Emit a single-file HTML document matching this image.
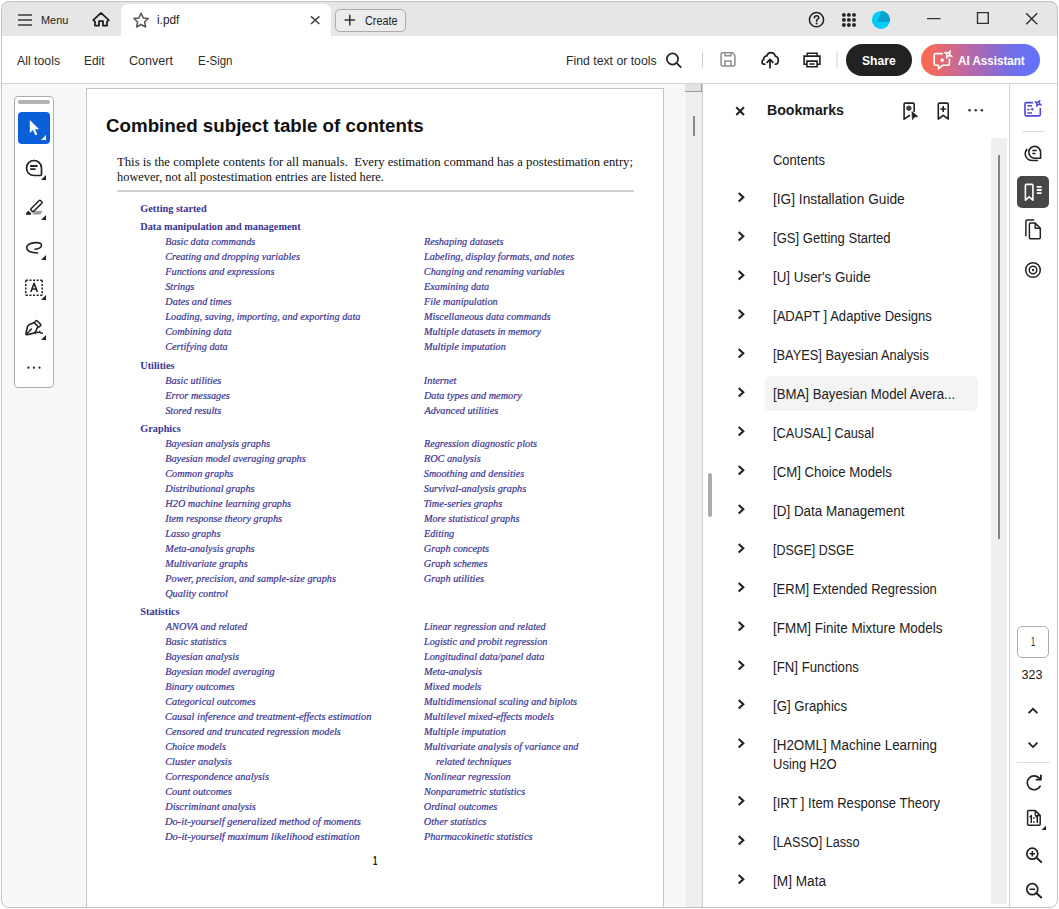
<!DOCTYPE html>
<html><head><meta charset="utf-8">
<style>
*{margin:0;padding:0;box-sizing:border-box}
html,body{width:1059px;height:909px;overflow:hidden;background:#fff}
#app{position:absolute;left:0;top:0;width:1059px;height:909px;clip-path:inset(1px round 8px);overflow:hidden}
#frame{position:absolute;left:1px;top:1px;width:1057px;height:907px;border:1px solid #c3c3c3;border-radius:8px}
.a{position:absolute}
.t{position:absolute;white-space:nowrap;line-height:0;transform-origin:0 0}
svg.ov{position:absolute;left:0;top:0}
</style></head><body>
<div id="app">
<div class="a" style="left:0px;top:0px;width:1059px;height:909px;background:#f8f8f8;"></div>
<div class="a" style="left:0px;top:0px;width:1059px;height:36px;background:#e6e6e6;"></div>
<div class="a" style="left:121px;top:4px;width:210px;height:32px;background:#fff;border-radius:7px 7px 0 0"></div>
<div class="a" style="left:335px;top:8.5px;width:71px;height:23px;background:#ececec;border:1px solid #ababab;border-radius:5px;box-sizing:border-box"></div>
<div class="a" style="left:0px;top:36px;width:1059px;height:47px;background:#fff;"></div>
<div class="a" style="left:0px;top:83px;width:1059px;height:1px;background:#d5d5d5;"></div>
<div class="a" style="left:846px;top:44px;width:66px;height:32px;background:#222;border-radius:16px"></div>
<div class="a" style="left:921px;top:44px;width:119px;height:32px;background:linear-gradient(90deg,#fd6a4c 0%,#f06a62 10%,#c0699f 36%,#9169c9 60%,#6e70ee 80%,#6372f7 100%);border-radius:16px"></div>
<div class="a" style="left:14px;top:96px;width:40px;height:292px;background:#fff;border:1px solid #adadad;border-radius:4px;box-sizing:border-box"></div>
<div class="a" style="left:18px;top:100px;width:32px;height:4px;background:#b3b3b3;border-radius:2px"></div>
<div class="a" style="left:18px;top:112px;width:32px;height:32px;background:#0b5fd8;border-radius:4px"></div>
<div class="a" style="left:86px;top:88px;width:578px;height:830px;background:#fff;border:1px solid #c5c5c5;box-sizing:border-box"></div>
<div class="a" style="left:117px;top:190px;width:517px;height:2px;background:#d2d2d2;"></div>
<div class="a" style="left:686px;top:84px;width:16px;height:830px;background:#efefef;"></div>
<div class="a" style="left:685px;top:84px;width:17px;height:8px;background:#e2e2e2;border-right:1px solid #9c9c9c;border-bottom:1px solid #9c9c9c;box-sizing:border-box"></div>
<div class="a" style="left:693px;top:116px;width:2px;height:20px;background:#8a8a8a;"></div>
<div class="a" style="left:702px;top:84px;width:308px;height:830px;background:#fff;"></div>
<div class="a" style="left:702px;top:84px;width:1px;height:830px;background:#cdcdcd;"></div>
<div class="a" style="left:708px;top:473px;width:4px;height:44px;background:#ababab;border-radius:2px"></div>
<div class="a" style="left:765px;top:376px;width:213px;height:35px;background:#f4f4f4;border-radius:5px"></div>
<div class="a" style="left:991px;top:138px;width:16px;height:766px;background:#efefef;"></div>
<div class="a" style="left:998px;top:155px;width:2px;height:384px;background:#858585;"></div>
<div class="a" style="left:1010px;top:84px;width:49px;height:830px;background:#fff;"></div>
<div class="a" style="left:1009px;top:84px;width:1px;height:830px;background:#d4d4d4;"></div>
<div class="a" style="left:1017px;top:176px;width:32px;height:32px;background:#474747;border-radius:5px"></div>
<div class="a" style="left:1017px;top:626px;width:32px;height:32px;background:#fff;border:1px solid #acacac;border-radius:5px;box-sizing:border-box"></div>
<div class="a" style="left:1022px;top:131px;width:23px;height:1px;background:#dedede;"></div>
<div class="a" style="left:1017px;top:762px;width:33px;height:1px;background:#dedede;"></div>
<svg class="ov" width="1059" height="909" viewBox="0 0 1059 909">
<path d="M18 15H32M18 20H32M18 25H32" fill="none" stroke="#3a3a3a" stroke-width="1.7" />
<path d="M95 21.6L93.2 20.1L101 12.9L108.8 20.1L107 21.6V25.7H103V21H99V25.7H95Z" fill="none" stroke="#1e1e1e" stroke-width="1.75" stroke-linejoin="round"/>
<path d="M141.1 13.2L143.3 17.9L148.3 18.5L144.6 22L145.6 27L141.1 24.5L136.6 27L137.6 22L133.9 18.5L138.9 17.9Z" fill="none" stroke="#555" stroke-width="1.5" stroke-linejoin="round"/>
<path d="M311 16.4L319.4 24M319.4 16.4L311 24" fill="none" stroke="#444" stroke-width="1.5" />
<path d="M349.8 14.8V25.4M344.5 20.1H355.1" fill="none" stroke="#333" stroke-width="1.5" />
<circle cx="816.5" cy="19.7" r="7.1" fill="none" stroke="#222" stroke-width="1.5"/>
<path d="M814.4 17.7Q814.5 15.7 816.6 15.7Q818.7 15.7 818.7 17.5Q818.7 18.7 817.5 19.4Q816.6 19.9 816.6 21.1" fill="none" stroke="#222" stroke-width="1.6" stroke-linecap="round"/>
<circle cx="816.6" cy="23.5" r="1" fill="#222"/>
<circle cx="843.9" cy="14.9" r="1.95" fill="#262626"/>
<circle cx="843.9" cy="19.9" r="1.95" fill="#262626"/>
<circle cx="843.9" cy="25" r="1.95" fill="#262626"/>
<circle cx="848.9" cy="14.9" r="1.95" fill="#262626"/>
<circle cx="848.9" cy="19.9" r="1.95" fill="#262626"/>
<circle cx="848.9" cy="25" r="1.95" fill="#262626"/>
<circle cx="854" cy="14.9" r="1.95" fill="#262626"/>
<circle cx="854" cy="19.9" r="1.95" fill="#262626"/>
<circle cx="854" cy="25" r="1.95" fill="#262626"/>
<circle cx="880.9" cy="19.9" r="9" fill="#00cdfb"/>
<path d="M881.5 10.92L877.1 21.9H889.67A9 9 0 0 0 881.5 10.92Z" fill="#05a2cb" stroke="none" stroke-width="0" />
<path d="M927 18.6H940.5" fill="none" stroke="#333" stroke-width="1.2" />
<path d="M977.5 12.6H988.3V23.4H977.5Z" fill="none" stroke="#333" stroke-width="1.4" />
<path d="M1026.2 13.2L1037.2 24.2M1037.2 13.2L1026.2 24.2" fill="none" stroke="#2a2a2a" stroke-width="1.35" />
<circle cx="672.5" cy="59" r="5.6" fill="none" stroke="#222" stroke-width="1.7"/>
<path d="M676.6 63.2L681.3 67.6" fill="none" stroke="#222" stroke-width="1.8" />
<path d="M702.5 51.5V67.5" fill="none" stroke="#d0d0d0" stroke-width="1" />
<path d="M837 51.5V67.5" fill="none" stroke="#d0d0d0" stroke-width="1" />
<path d="M722.5 52.85H732.8L734.95 55.6V64.4Q734.95 65.9 733.45 65.9H722.55Q721.05 65.9 721.05 64.4V54.35Q721.05 52.85 722.5 52.85Z" fill="none" stroke="#8e8e8e" stroke-width="1.5" stroke-linejoin="round"/>
<path d="M724.95 52.85V55.85H730.95V52.85M724.95 65.9V61.05H730.95V65.9" fill="none" stroke="#8e8e8e" stroke-width="1.5" />
<path d="M764.8 64.2H763.6Q762 64.2 762 62Q762 59.8 763.8 59.4Q763.4 56.3 766.8 55.9Q767.8 52.6 770.8 52.6Q774.4 52.6 775.2 56Q778.3 56.8 778.3 60.2Q778.3 64.2 775.4 64.2" fill="none" stroke="#1e1e1e" stroke-width="1.7" stroke-linecap="round" stroke-linejoin="round"/>
<path d="M770 68.6V59.6M766.6 62.8L770 59.4L773.4 62.8" fill="none" stroke="#1e1e1e" stroke-width="1.7" stroke-linejoin="round"/>
<path d="M807.3 55.6V53.3H817.1V55.6" fill="none" stroke="#1e1e1e" stroke-width="1.6" />
<path d="M806.6 64.2H804.1V56.1H819.9V64.2H817.4" fill="none" stroke="#1e1e1e" stroke-width="1.6" stroke-linejoin="miter"/>
<path d="M806.9 61.1H817.1V66.8H806.9Z" fill="none" stroke="#1e1e1e" stroke-width="1.6" />
<path d="M809.4 64H814.6" fill="none" stroke="#1e1e1e" stroke-width="1.5" />
<path d="M943 53.6H935.6Q934.2 53.6 934.2 55V63.9Q934.2 65.3 935.6 65.3H938.5V68.8L942.6 65.3H948Q949.4 65.3 949.4 63.9V58.6" fill="none" stroke="#fff" stroke-width="1.6" stroke-linejoin="round"/>
<path d="M952.36 56.56L948.80 56.03L946.14 58.46L946.67 54.90L944.24 52.24L947.80 52.77L950.46 50.34L949.93 53.90Z" fill="#fff" stroke="#fff" stroke-width="0.9" stroke-linejoin="round"/>
<circle cx="948.3" cy="54.4" r="0.75" fill="#d86a84"/>
<rect x="940.7" y="58.7" width="3" height="3" fill="#fff" transform="rotate(-15 942.2 60.2)"/>
<path d="M29.8 120V133L32.9 130L35.3 135.2L37.3 134.2L35 129.3H39.2Z" fill="#fff" stroke="none" stroke-width="0" />
<path d="M46 135V140H41Z" fill="#fff" stroke="none" stroke-width="0" />
<path d="M34 160.5A7.5 7.5 0 1 0 34 175.5H40.2Q41.5 175.5 41.5 174.2V168A7.5 7.5 0 0 0 34 160.5Z" fill="none" stroke="#222" stroke-width="1.7" stroke-linejoin="round"/>
<path d="M30.1 166H37.6M30.1 169.1H35.6" fill="none" stroke="#222" stroke-width="1.9" />
<path d="M46 175V180H41Z" fill="#222" stroke="none" stroke-width="0" />
<rect x="29.7" y="204.1" width="13.4" height="3.7" rx="0.9" fill="#fff" stroke="#222" stroke-width="1.5" transform="rotate(-45 36.4 205.95)"/>
<path d="M28.3 210.9L31.1 213.5L30.6 214.5H26.1Q26.1 212.8 28.3 210.9Z" fill="#222" stroke="#222" stroke-width="0.6" stroke-linejoin="round"/>
<path d="M34.6 210.9H42.7L40.4 214.5H32.2Z" fill="#9c9c9c" stroke="none" stroke-width="0" />
<path d="M46 215V220H41Z" fill="#222" stroke="none" stroke-width="0" />
<path d="M35 249.2Q41 248.6 41.5 245.6Q41.8 242.4 36 242.6Q27 243 26.6 247.6Q26.6 252.6 37.6 253" fill="none" stroke="#222" stroke-width="1.6" stroke-linecap="round"/>
<path d="M46 255V260H41Z" fill="#222" stroke="none" stroke-width="0" />
<path d="M25.8 280.3H42.2M25.8 295.3H42.2" fill="none" stroke="#222" stroke-width="1.5" stroke-dasharray="2.1 1.5"/>
<path d="M25.8 280.3V295.3M42.2 280.3V295.3" fill="none" stroke="#222" stroke-width="1.5" stroke-dasharray="2.1 1.5"/>
<path d="M30.9 291.9L34.1 283.3L37.3 291.9M32.1 289H36.1" fill="none" stroke="#222" stroke-width="1.6" stroke-linejoin="round"/>
<path d="M46 295V300H41Z" fill="#222" stroke="none" stroke-width="0" />
<rect x="34.4" y="322.1" width="6.6" height="3.3" rx="0.8" fill="none" stroke="#222" stroke-width="1.5" transform="rotate(45 37.7 323.75)"/>
<path d="M34.6 322.6L29.6 324.6Q27.9 325.3 27.4 327L25.9 333.4Q25.7 334.9 27.2 334.7L33.6 333.1Q35.3 332.6 35.9 331L37.9 326.4" fill="none" stroke="#222" stroke-width="1.6" stroke-linejoin="round"/>
<path d="M26.6 334L31.5 329" fill="none" stroke="#222" stroke-width="1.5" stroke-linecap="round"/>
<path d="M35.3 333.6Q36.6 331.6 37.8 332.4Q38.8 333.2 39.8 331.4Q40.2 333.6 42.4 333.2" fill="none" stroke="#222" stroke-width="1.4" stroke-linecap="round" stroke-linejoin="round"/>
<path d="M46 335V340H41Z" fill="#222" stroke="none" stroke-width="0" />
<circle cx="28.4" cy="367.7" r="1.1" fill="#222"/>
<circle cx="33.9" cy="367.7" r="1.1" fill="#222"/>
<circle cx="39.5" cy="367.7" r="1.1" fill="#222"/>
<path d="M736.3 107.3L744 115M744 107.3L736.3 115" fill="none" stroke="#222" stroke-width="2.0" />
<path d="M909.6 115.5L904.1 119.2V104.2Q904.1 103.1 905.2 103.1H913.1Q914.2 103.1 914.2 104.2V111.4" fill="none" stroke="#222" stroke-width="1.6" stroke-linejoin="round" stroke-linecap="round"/>
<circle cx="908.9" cy="108.2" r="2.2" fill="#4a4a4a" stroke="#222" stroke-width="0.9"/>
<path d="M911.9 111.6L917.9 116.6L914.5 117L912.4 119.8Z" fill="#222" stroke="#222" stroke-width="0.6" stroke-linejoin="round"/>
<path d="M938.3 104.2Q938.3 103.1 939.4 103.1H947.1Q948.2 103.1 948.2 104.2V119L943.2 115.3L938.3 119Z" fill="none" stroke="#222" stroke-width="1.6" stroke-linejoin="round"/>
<path d="M943.2 106.1V111.9M940.3 109H946.1" fill="none" stroke="#222" stroke-width="1.6" />
<circle cx="969.6" cy="110.3" r="1.25" fill="#333"/>
<circle cx="975.7" cy="110.3" r="1.25" fill="#333"/>
<circle cx="981.8" cy="110.3" r="1.25" fill="#333"/>
<path d="M1033 102.6H1026.3Q1025 102.6 1025 103.9V114.6Q1025 115.9 1026.3 115.9H1039Q1040.3 115.9 1040.3 114.6V108" fill="none" stroke="#5246d9" stroke-width="1.6" stroke-linejoin="round"/>
<path d="M1027.3 105.7H1032M1027.3 109.4H1029.6M1027.3 113H1032" fill="none" stroke="#5246d9" stroke-width="1.5" />
<circle cx="1032.3" cy="109.3" r="1.2" fill="#5246d9"/>
<path d="M1041.47 105.14L1038.61 104.74L1036.46 106.67L1036.86 103.81L1034.93 101.66L1037.79 102.06L1039.94 100.13L1039.54 102.99Z" fill="#5246d9" stroke="#5246d9" stroke-width="1.0" stroke-linejoin="round"/>
<circle cx="1038.2" cy="103.4" r="0.6" fill="#fff"/>
<path d="M1026.9 149.3Q1024.4 152.5 1025.6 156Q1027.4 160.4 1032.4 160.5H1037.4" fill="none" stroke="#222" stroke-width="1.6" stroke-linecap="round"/>
<path d="M1034.7 146.4A5.9 5.9 0 1 0 1034.7 158.2H1040.6V152.3A5.9 5.9 0 0 0 1034.7 146.4Z" fill="none" stroke="#222" stroke-width="1.6" stroke-linejoin="round"/>
<path d="M1032.3 150.6H1036.8M1032.3 153.4H1035.5" fill="none" stroke="#222" stroke-width="1.5" />
<path d="M1025.4 185.2Q1025.4 184.4 1026.2 184.4H1032.1Q1032.9 184.4 1032.9 185.2V200.2L1029.15 196.8L1025.4 200.2Z" fill="none" stroke="#fff" stroke-width="1.6" stroke-linejoin="round"/>
<path d="M1036.8 186.9H1041.6M1036.8 190H1041.6M1036.8 193.1H1041.6" fill="none" stroke="#fff" stroke-width="1.8" />
<path d="M1033.6 220H1027Q1025.9 220 1025.9 221.1V235.8" fill="none" stroke="#222" stroke-width="1.5" stroke-linecap="round" stroke-linejoin="round"/>
<path d="M1035.2 223.1H1030.5Q1029.4 223.1 1029.4 224.2V237.6Q1029.4 238.7 1030.5 238.7H1039.2Q1040.3 238.7 1040.3 237.6V228.2Z" fill="none" stroke="#222" stroke-width="1.5" stroke-linejoin="round"/>
<path d="M1035.2 223.3V228.2H1040.1" fill="none" stroke="#222" stroke-width="1.4" stroke-linejoin="round"/>
<circle cx="1033" cy="270" r="7.3" fill="none" stroke="#222" stroke-width="1.5"/>
<circle cx="1033" cy="270" r="3.8" fill="none" stroke="#222" stroke-width="1.5"/>
<circle cx="1033" cy="270" r="1.2" fill="#222"/>
<path d="M1028.6 713.2L1033 708.8L1037.4 713.2" fill="none" stroke="#222" stroke-width="1.8" />
<path d="M1028.6 742.7L1033 747.1L1037.4 742.7" fill="none" stroke="#222" stroke-width="1.8" />
<path d="M1040.1 786.3A6.9 6.9 0 1 1 1039.6 778.6" fill="none" stroke="#222" stroke-width="1.7" stroke-linecap="round"/>
<path d="M1036.5 779.7H1040.9V775.3" fill="none" stroke="#222" stroke-width="1.8" stroke-linejoin="miter" stroke-linecap="round"/>
<path d="M1028.6 810.6H1035.2L1040.2 815.6V824.2Q1040.2 825.2 1039.2 825.2H1028.6Q1027.6 825.2 1027.6 824.2V811.6Q1027.6 810.6 1028.6 810.6Z" fill="none" stroke="#222" stroke-width="1.5" stroke-linejoin="round"/>
<path d="M1035.2 810.8V814.6Q1035.2 815.6 1036.2 815.6H1040" fill="none" stroke="#222" stroke-width="1.3" />
<path d="M1029.6 817L1031.3 815.9V822.9M1035.6 817L1037.3 815.9V822.9" fill="none" stroke="#222" stroke-width="1.5" />
<rect x="1033.1" y="817.3" width="1.5" height="1.5" fill="#222"/><rect x="1033.1" y="821.3" width="1.5" height="1.5" fill="#222"/>
<path d="M1046 825.6V830H1041.6Z" fill="#222" stroke="none" stroke-width="0" />
<circle cx="1032.3" cy="853.7" r="5.5" fill="none" stroke="#222" stroke-width="1.7"/>
<path d="M1036.3 857.6L1041.2 862" fill="none" stroke="#222" stroke-width="2.0" stroke-linecap="round"/>
<path d="M1029.6 853.7H1035M1032.3 851V856.4" fill="none" stroke="#222" stroke-width="1.6" />
<circle cx="1032.3" cy="889.2" r="5.5" fill="none" stroke="#222" stroke-width="1.7"/>
<path d="M1036.3 893.1L1041.2 897.5" fill="none" stroke="#222" stroke-width="2.0" stroke-linecap="round"/>
<path d="M1029.6 889.2H1035" fill="none" stroke="#222" stroke-width="1.6" />
<path d="M738.7 192.89999999999998L743.3 197.2L738.7 201.5" fill="none" stroke="#222" stroke-width="2.1" />
<path d="M738.7 231.89999999999998L743.3 236.2L738.7 240.5" fill="none" stroke="#222" stroke-width="2.1" />
<path d="M738.7 270.9L743.3 275.2L738.7 279.5" fill="none" stroke="#222" stroke-width="2.1" />
<path d="M738.7 309.9L743.3 314.2L738.7 318.5" fill="none" stroke="#222" stroke-width="2.1" />
<path d="M738.7 348.9L743.3 353.2L738.7 357.5" fill="none" stroke="#222" stroke-width="2.1" />
<path d="M738.7 387.9L743.3 392.2L738.7 396.5" fill="none" stroke="#222" stroke-width="2.1" />
<path d="M738.7 426.9L743.3 431.2L738.7 435.5" fill="none" stroke="#222" stroke-width="2.1" />
<path d="M738.7 465.9L743.3 470.2L738.7 474.5" fill="none" stroke="#222" stroke-width="2.1" />
<path d="M738.7 504.90000000000003L743.3 509.20000000000005L738.7 513.5" fill="none" stroke="#222" stroke-width="2.1" />
<path d="M738.7 543.9000000000001L743.3 548.2L738.7 552.5" fill="none" stroke="#222" stroke-width="2.1" />
<path d="M738.7 582.9000000000001L743.3 587.2L738.7 591.5" fill="none" stroke="#222" stroke-width="2.1" />
<path d="M738.7 621.9000000000001L743.3 626.2L738.7 630.5" fill="none" stroke="#222" stroke-width="2.1" />
<path d="M738.7 660.9000000000001L743.3 665.2L738.7 669.5" fill="none" stroke="#222" stroke-width="2.1" />
<path d="M738.7 699.9000000000001L743.3 704.2L738.7 708.5" fill="none" stroke="#222" stroke-width="2.1" />
<path d="M738.7 738.9000000000001L743.3 743.2L738.7 747.5" fill="none" stroke="#222" stroke-width="2.1" />
<path d="M738.7 796.5L743.3 800.8L738.7 805.0999999999999" fill="none" stroke="#222" stroke-width="2.1" />
<path d="M738.7 836.0L743.3 840.3L738.7 844.5999999999999" fill="none" stroke="#222" stroke-width="2.1" />
<path d="M738.7 874.9000000000001L743.3 879.2L738.7 883.5" fill="none" stroke="#222" stroke-width="2.1" />
</svg>
<div class="t" style="left:40.70px;top:20.00px;font-size:11.4px;font-family:'Liberation Sans',sans-serif;color:#222;transform:scaleX(0.9579);">Menu</div>
<div class="t" style="left:157.00px;top:20.00px;font-size:12px;font-family:'Liberation Sans',sans-serif;color:#222;transform:scaleX(0.9846);">i.pdf</div>
<div class="t" style="left:365.00px;top:21.00px;font-size:12px;font-family:'Liberation Sans',sans-serif;color:#222;transform:scaleX(0.9028);">Create</div>
<div class="t" style="left:16.90px;top:61.00px;font-size:13.5px;font-family:'Liberation Sans',sans-serif;color:#2c2c2c;transform:scaleX(0.9101);">All tools</div>
<div class="t" style="left:84.30px;top:61.00px;font-size:13.5px;font-family:'Liberation Sans',sans-serif;color:#2c2c2c;transform:scaleX(0.8817);">Edit</div>
<div class="t" style="left:129.00px;top:61.00px;font-size:13.5px;font-family:'Liberation Sans',sans-serif;color:#2c2c2c;transform:scaleX(0.9312);">Convert</div>
<div class="t" style="left:197.50px;top:61.00px;font-size:13.5px;font-family:'Liberation Sans',sans-serif;color:#2c2c2c;transform:scaleX(0.8519);">E-Sign</div>
<div class="t" style="left:566.40px;top:61.00px;font-size:13.5px;font-family:'Liberation Sans',sans-serif;color:#2c2c2c;transform:scaleX(0.9078);">Find text or tools</div>
<div class="t" style="left:862.00px;top:61.00px;font-size:13px;font-family:'Liberation Sans',sans-serif;color:#fff;font-weight:bold;transform:scaleX(0.9350);">Share</div>
<div class="t" style="left:958.00px;top:61.00px;font-size:13px;font-family:'Liberation Sans',sans-serif;color:#fff;font-weight:bold;transform:scaleX(0.8935);">AI Assistant</div>
<div class="t" style="left:767.00px;top:110.00px;font-size:14.5px;font-family:'Liberation Sans',sans-serif;color:#1a1a1a;font-weight:bold;transform:scaleX(0.9747);">Bookmarks</div>
<div class="t" style="left:773.20px;top:160.00px;font-size:14.7px;font-family:'Liberation Sans',sans-serif;color:#222;transform:scaleX(0.8836);">Contents</div>
<div class="t" style="left:773.20px;top:199.00px;font-size:14.7px;font-family:'Liberation Sans',sans-serif;color:#222;transform:scaleX(0.9324);">[IG] Installation Guide</div>
<div class="t" style="left:773.20px;top:238.00px;font-size:14.7px;font-family:'Liberation Sans',sans-serif;color:#222;transform:scaleX(0.8893);">[GS] Getting Started</div>
<div class="t" style="left:773.20px;top:277.00px;font-size:14.7px;font-family:'Liberation Sans',sans-serif;color:#222;transform:scaleX(0.9101);">[U] User's Guide</div>
<div class="t" style="left:773.20px;top:316.00px;font-size:14.7px;font-family:'Liberation Sans',sans-serif;color:#222;transform:scaleX(0.8900);">[ADAPT ] Adaptive Designs</div>
<div class="t" style="left:773.20px;top:355.00px;font-size:14.7px;font-family:'Liberation Sans',sans-serif;color:#222;transform:scaleX(0.8727);">[BAYES] Bayesian Analysis</div>
<div class="t" style="left:773.20px;top:394.00px;font-size:14.7px;font-family:'Liberation Sans',sans-serif;color:#222;transform:scaleX(0.9004);">[BMA] Bayesian Model Avera...</div>
<div class="t" style="left:773.20px;top:433.00px;font-size:14.7px;font-family:'Liberation Sans',sans-serif;color:#222;transform:scaleX(0.8661);">[CAUSAL] Causal</div>
<div class="t" style="left:773.20px;top:472.00px;font-size:14.7px;font-family:'Liberation Sans',sans-serif;color:#222;transform:scaleX(0.8991);">[CM] Choice Models</div>
<div class="t" style="left:773.20px;top:511.00px;font-size:14.7px;font-family:'Liberation Sans',sans-serif;color:#222;transform:scaleX(0.9152);">[D] Data Management</div>
<div class="t" style="left:773.20px;top:550.00px;font-size:14.7px;font-family:'Liberation Sans',sans-serif;color:#222;transform:scaleX(0.8477);">[DSGE] DSGE</div>
<div class="t" style="left:773.20px;top:589.00px;font-size:14.7px;font-family:'Liberation Sans',sans-serif;color:#222;transform:scaleX(0.8841);">[ERM] Extended Regression</div>
<div class="t" style="left:773.20px;top:628.00px;font-size:14.7px;font-family:'Liberation Sans',sans-serif;color:#222;transform:scaleX(0.9148);">[FMM] Finite Mixture Models</div>
<div class="t" style="left:773.20px;top:667.00px;font-size:14.7px;font-family:'Liberation Sans',sans-serif;color:#222;transform:scaleX(0.8996);">[FN] Functions</div>
<div class="t" style="left:773.20px;top:706.00px;font-size:14.7px;font-family:'Liberation Sans',sans-serif;color:#222;transform:scaleX(0.8982);">[G] Graphics</div>
<div class="t" style="left:773.20px;top:745.00px;font-size:14.7px;font-family:'Liberation Sans',sans-serif;color:#222;transform:scaleX(0.9124);">[H2OML] Machine Learning</div>
<div class="t" style="left:773.20px;top:803.00px;font-size:14.7px;font-family:'Liberation Sans',sans-serif;color:#222;transform:scaleX(0.8901);">[IRT ] Item Response Theory</div>
<div class="t" style="left:773.20px;top:842.00px;font-size:14.7px;font-family:'Liberation Sans',sans-serif;color:#222;transform:scaleX(0.8607);">[LASSO] Lasso</div>
<div class="t" style="left:773.20px;top:881.00px;font-size:14.7px;font-family:'Liberation Sans',sans-serif;color:#222;transform:scaleX(0.9283);">[M] Mata</div>
<div class="t" style="left:773.20px;top:764.00px;font-size:14.7px;font-family:'Liberation Sans',sans-serif;color:#222;transform:scaleX(0.8846);">Using H2O</div>
<div class="t" style="left:1030.90px;top:642.00px;font-size:12.5px;font-family:'Liberation Sans',sans-serif;color:#222;transform:scaleX(0.5899);">1</div>
<div class="t" style="left:1021.50px;top:675.00px;font-size:12.5px;font-family:'Liberation Sans',sans-serif;color:#222;">323</div>
<div class="t" style="left:105.90px;top:126.00px;font-size:19.1px;font-family:'Liberation Sans',sans-serif;color:#111;font-weight:bold;transform:scaleX(0.9816);">Combined subject table of contents</div>
<div class="t" style="left:117.00px;top:162.00px;font-size:12.4px;font-family:'Liberation Serif',serif;color:#111;transform:scaleX(1.0257);">This is the complete contents for all manuals.&nbsp; Every estimation command has a postestimation entry;</div>
<div class="t" style="left:117.00px;top:177.00px;font-size:12.4px;font-family:'Liberation Serif',serif;color:#111;">however, not all postestimation entries are listed here.</div>
<div class="t" style="left:140.30px;top:209.00px;font-size:10.26px;font-family:'Liberation Serif',serif;color:#3a3492;font-weight:bold;">Getting started</div>
<div class="t" style="left:140.30px;top:227.00px;font-size:10.26px;font-family:'Liberation Serif',serif;color:#3a3492;font-weight:bold;">Data manipulation and management</div>
<div class="t" style="left:140.30px;top:366.00px;font-size:10.26px;font-family:'Liberation Serif',serif;color:#3a3492;font-weight:bold;">Utilities</div>
<div class="t" style="left:140.30px;top:429.00px;font-size:10.26px;font-family:'Liberation Serif',serif;color:#3a3492;font-weight:bold;">Graphics</div>
<div class="t" style="left:140.30px;top:612.00px;font-size:10.26px;font-family:'Liberation Serif',serif;color:#3a3492;font-weight:bold;">Statistics</div>
<div class="t" style="left:165.20px;top:242.00px;font-size:10.28px;font-family:'Liberation Serif',serif;color:#3a3492;font-style:italic;-webkit-text-stroke:0.2px #3a3392;">Basic data commands</div>
<div class="t" style="left:165.20px;top:257.00px;font-size:10.28px;font-family:'Liberation Serif',serif;color:#3a3492;font-style:italic;-webkit-text-stroke:0.2px #3a3392;">Creating and dropping variables</div>
<div class="t" style="left:165.30px;top:272.00px;font-size:10.28px;font-family:'Liberation Serif',serif;color:#3a3492;font-style:italic;-webkit-text-stroke:0.2px #3a3392;">Functions and expressions</div>
<div class="t" style="left:165.20px;top:287.00px;font-size:10.28px;font-family:'Liberation Serif',serif;color:#3a3492;font-style:italic;-webkit-text-stroke:0.2px #3a3392;">Strings</div>
<div class="t" style="left:165.35px;top:302.00px;font-size:10.28px;font-family:'Liberation Serif',serif;color:#3a3492;font-style:italic;-webkit-text-stroke:0.2px #3a3392;">Dates and times</div>
<div class="t" style="left:165.35px;top:317.00px;font-size:10.28px;font-family:'Liberation Serif',serif;color:#3a3492;font-style:italic;-webkit-text-stroke:0.2px #3a3392;">Loading, saving, importing, and exporting data</div>
<div class="t" style="left:165.20px;top:332.00px;font-size:10.28px;font-family:'Liberation Serif',serif;color:#3a3492;font-style:italic;-webkit-text-stroke:0.2px #3a3392;">Combining data</div>
<div class="t" style="left:165.20px;top:347.00px;font-size:10.28px;font-family:'Liberation Serif',serif;color:#3a3492;font-style:italic;-webkit-text-stroke:0.2px #3a3392;">Certifying data</div>
<div class="t" style="left:423.90px;top:242.00px;font-size:10.28px;font-family:'Liberation Serif',serif;color:#3a3492;font-style:italic;-webkit-text-stroke:0.2px #3a3392;">Reshaping datasets</div>
<div class="t" style="left:423.95px;top:257.00px;font-size:10.28px;font-family:'Liberation Serif',serif;color:#3a3492;font-style:italic;-webkit-text-stroke:0.2px #3a3392;">Labeling, display formats, and notes</div>
<div class="t" style="left:423.80px;top:272.00px;font-size:10.28px;font-family:'Liberation Serif',serif;color:#3a3492;font-style:italic;-webkit-text-stroke:0.2px #3a3392;">Changing and renaming variables</div>
<div class="t" style="left:423.95px;top:287.00px;font-size:10.28px;font-family:'Liberation Serif',serif;color:#3a3492;font-style:italic;-webkit-text-stroke:0.2px #3a3392;">Examining data</div>
<div class="t" style="left:423.90px;top:302.00px;font-size:10.28px;font-family:'Liberation Serif',serif;color:#3a3492;font-style:italic;-webkit-text-stroke:0.2px #3a3392;">File manipulation</div>
<div class="t" style="left:423.95px;top:317.00px;font-size:10.28px;font-family:'Liberation Serif',serif;color:#3a3492;font-style:italic;-webkit-text-stroke:0.2px #3a3392;">Miscellaneous data commands</div>
<div class="t" style="left:423.95px;top:332.00px;font-size:10.28px;font-family:'Liberation Serif',serif;color:#3a3492;font-style:italic;-webkit-text-stroke:0.2px #3a3392;">Multiple datasets in memory</div>
<div class="t" style="left:423.95px;top:347.00px;font-size:10.28px;font-family:'Liberation Serif',serif;color:#3a3492;font-style:italic;-webkit-text-stroke:0.2px #3a3392;">Multiple imputation</div>
<div class="t" style="left:165.20px;top:381.00px;font-size:10.28px;font-family:'Liberation Serif',serif;color:#3a3492;font-style:italic;-webkit-text-stroke:0.2px #3a3392;">Basic utilities</div>
<div class="t" style="left:165.35px;top:396.00px;font-size:10.28px;font-family:'Liberation Serif',serif;color:#3a3492;font-style:italic;-webkit-text-stroke:0.2px #3a3392;">Error messages</div>
<div class="t" style="left:165.20px;top:411.00px;font-size:10.28px;font-family:'Liberation Serif',serif;color:#3a3492;font-style:italic;-webkit-text-stroke:0.2px #3a3392;">Stored results</div>
<div class="t" style="left:423.85px;top:381.00px;font-size:10.28px;font-family:'Liberation Serif',serif;color:#3a3492;font-style:italic;-webkit-text-stroke:0.2px #3a3392;">Internet</div>
<div class="t" style="left:423.95px;top:396.00px;font-size:10.28px;font-family:'Liberation Serif',serif;color:#3a3492;font-style:italic;-webkit-text-stroke:0.2px #3a3392;">Data types and memory</div>
<div class="t" style="left:424.40px;top:411.00px;font-size:10.28px;font-family:'Liberation Serif',serif;color:#3a3492;font-style:italic;-webkit-text-stroke:0.2px #3a3392;">Advanced utilities</div>
<div class="t" style="left:165.20px;top:444.00px;font-size:10.28px;font-family:'Liberation Serif',serif;color:#3a3492;font-style:italic;-webkit-text-stroke:0.2px #3a3392;">Bayesian analysis graphs</div>
<div class="t" style="left:165.20px;top:459.00px;font-size:10.28px;font-family:'Liberation Serif',serif;color:#3a3492;font-style:italic;-webkit-text-stroke:0.2px #3a3392;">Bayesian model averaging graphs</div>
<div class="t" style="left:165.20px;top:474.00px;font-size:10.28px;font-family:'Liberation Serif',serif;color:#3a3492;font-style:italic;-webkit-text-stroke:0.2px #3a3392;">Common graphs</div>
<div class="t" style="left:165.35px;top:489.00px;font-size:10.28px;font-family:'Liberation Serif',serif;color:#3a3492;font-style:italic;-webkit-text-stroke:0.2px #3a3392;">Distributional graphs</div>
<div class="t" style="left:165.35px;top:504.00px;font-size:10.28px;font-family:'Liberation Serif',serif;color:#3a3492;font-style:italic;-webkit-text-stroke:0.2px #3a3392;">H2O machine learning graphs</div>
<div class="t" style="left:165.25px;top:519.00px;font-size:10.28px;font-family:'Liberation Serif',serif;color:#3a3492;font-style:italic;-webkit-text-stroke:0.2px #3a3392;">Item response theory graphs</div>
<div class="t" style="left:165.35px;top:534.00px;font-size:10.28px;font-family:'Liberation Serif',serif;color:#3a3492;font-style:italic;-webkit-text-stroke:0.2px #3a3392;">Lasso graphs</div>
<div class="t" style="left:165.35px;top:549.00px;font-size:10.28px;font-family:'Liberation Serif',serif;color:#3a3492;font-style:italic;-webkit-text-stroke:0.2px #3a3392;">Meta-analysis graphs</div>
<div class="t" style="left:165.35px;top:564.00px;font-size:10.28px;font-family:'Liberation Serif',serif;color:#3a3492;font-style:italic;-webkit-text-stroke:0.2px #3a3392;">Multivariate graphs</div>
<div class="t" style="left:165.30px;top:579.00px;font-size:10.28px;font-family:'Liberation Serif',serif;color:#3a3492;font-style:italic;-webkit-text-stroke:0.2px #3a3392;">Power, precision, and sample-size graphs</div>
<div class="t" style="left:165.20px;top:594.00px;font-size:10.28px;font-family:'Liberation Serif',serif;color:#3a3492;font-style:italic;-webkit-text-stroke:0.2px #3a3392;">Quality control</div>
<div class="t" style="left:423.90px;top:444.00px;font-size:10.28px;font-family:'Liberation Serif',serif;color:#3a3492;font-style:italic;-webkit-text-stroke:0.2px #3a3392;">Regression diagnostic plots</div>
<div class="t" style="left:423.90px;top:459.00px;font-size:10.28px;font-family:'Liberation Serif',serif;color:#3a3492;font-style:italic;-webkit-text-stroke:0.2px #3a3392;">ROC analysis</div>
<div class="t" style="left:423.80px;top:474.00px;font-size:10.28px;font-family:'Liberation Serif',serif;color:#3a3492;font-style:italic;-webkit-text-stroke:0.2px #3a3392;">Smoothing and densities</div>
<div class="t" style="left:423.80px;top:489.00px;font-size:10.28px;font-family:'Liberation Serif',serif;color:#3a3492;font-style:italic;-webkit-text-stroke:0.2px #3a3392;">Survival-analysis graphs</div>
<div class="t" style="left:423.80px;top:504.00px;font-size:10.28px;font-family:'Liberation Serif',serif;color:#3a3492;font-style:italic;-webkit-text-stroke:0.2px #3a3392;">Time-series graphs</div>
<div class="t" style="left:423.95px;top:519.00px;font-size:10.28px;font-family:'Liberation Serif',serif;color:#3a3492;font-style:italic;-webkit-text-stroke:0.2px #3a3392;">More statistical graphs</div>
<div class="t" style="left:423.95px;top:534.00px;font-size:10.28px;font-family:'Liberation Serif',serif;color:#3a3492;font-style:italic;-webkit-text-stroke:0.2px #3a3392;">Editing</div>
<div class="t" style="left:423.80px;top:549.00px;font-size:10.28px;font-family:'Liberation Serif',serif;color:#3a3492;font-style:italic;-webkit-text-stroke:0.2px #3a3392;">Graph concepts</div>
<div class="t" style="left:423.80px;top:564.00px;font-size:10.28px;font-family:'Liberation Serif',serif;color:#3a3492;font-style:italic;-webkit-text-stroke:0.2px #3a3392;">Graph schemes</div>
<div class="t" style="left:423.80px;top:579.00px;font-size:10.28px;font-family:'Liberation Serif',serif;color:#3a3492;font-style:italic;-webkit-text-stroke:0.2px #3a3392;">Graph utilities</div>
<div class="t" style="left:165.80px;top:627.00px;font-size:10.28px;font-family:'Liberation Serif',serif;color:#3a3492;font-style:italic;-webkit-text-stroke:0.2px #3a3392;">ANOVA and related</div>
<div class="t" style="left:165.20px;top:642.00px;font-size:10.28px;font-family:'Liberation Serif',serif;color:#3a3492;font-style:italic;-webkit-text-stroke:0.2px #3a3392;">Basic statistics</div>
<div class="t" style="left:165.20px;top:657.00px;font-size:10.28px;font-family:'Liberation Serif',serif;color:#3a3492;font-style:italic;-webkit-text-stroke:0.2px #3a3392;">Bayesian analysis</div>
<div class="t" style="left:165.20px;top:672.00px;font-size:10.28px;font-family:'Liberation Serif',serif;color:#3a3492;font-style:italic;-webkit-text-stroke:0.2px #3a3392;">Bayesian model averaging</div>
<div class="t" style="left:165.20px;top:687.00px;font-size:10.28px;font-family:'Liberation Serif',serif;color:#3a3492;font-style:italic;-webkit-text-stroke:0.2px #3a3392;">Binary outcomes</div>
<div class="t" style="left:165.20px;top:702.00px;font-size:10.28px;font-family:'Liberation Serif',serif;color:#3a3492;font-style:italic;-webkit-text-stroke:0.2px #3a3392;">Categorical outcomes</div>
<div class="t" style="left:165.20px;top:717.00px;font-size:10.28px;font-family:'Liberation Serif',serif;color:#3a3492;font-style:italic;transform:scaleX(1.0120);-webkit-text-stroke:0.2px #3a3392;">Causal inference and treatment-effects estimation</div>
<div class="t" style="left:165.20px;top:732.00px;font-size:10.28px;font-family:'Liberation Serif',serif;color:#3a3492;font-style:italic;-webkit-text-stroke:0.2px #3a3392;">Censored and truncated regression models</div>
<div class="t" style="left:165.20px;top:747.00px;font-size:10.28px;font-family:'Liberation Serif',serif;color:#3a3492;font-style:italic;-webkit-text-stroke:0.2px #3a3392;">Choice models</div>
<div class="t" style="left:165.20px;top:762.00px;font-size:10.28px;font-family:'Liberation Serif',serif;color:#3a3492;font-style:italic;-webkit-text-stroke:0.2px #3a3392;">Cluster analysis</div>
<div class="t" style="left:165.20px;top:777.00px;font-size:10.28px;font-family:'Liberation Serif',serif;color:#3a3492;font-style:italic;-webkit-text-stroke:0.2px #3a3392;">Correspondence analysis</div>
<div class="t" style="left:165.20px;top:792.00px;font-size:10.28px;font-family:'Liberation Serif',serif;color:#3a3492;font-style:italic;-webkit-text-stroke:0.2px #3a3392;">Count outcomes</div>
<div class="t" style="left:165.35px;top:807.00px;font-size:10.28px;font-family:'Liberation Serif',serif;color:#3a3492;font-style:italic;-webkit-text-stroke:0.2px #3a3392;">Discriminant analysis</div>
<div class="t" style="left:165.35px;top:822.00px;font-size:10.28px;font-family:'Liberation Serif',serif;color:#3a3492;font-style:italic;transform:scaleX(1.0251);-webkit-text-stroke:0.2px #3a3392;">Do-it-yourself generalized method of moments</div>
<div class="t" style="left:165.35px;top:837.00px;font-size:10.28px;font-family:'Liberation Serif',serif;color:#3a3492;font-style:italic;transform:scaleX(1.0272);-webkit-text-stroke:0.2px #3a3392;">Do-it-yourself maximum likelihood estimation</div>
<div class="t" style="left:423.95px;top:627.00px;font-size:10.28px;font-family:'Liberation Serif',serif;color:#3a3492;font-style:italic;-webkit-text-stroke:0.2px #3a3392;">Linear regression and related</div>
<div class="t" style="left:423.95px;top:642.00px;font-size:10.28px;font-family:'Liberation Serif',serif;color:#3a3492;font-style:italic;-webkit-text-stroke:0.2px #3a3392;">Logistic and probit regression</div>
<div class="t" style="left:423.95px;top:657.00px;font-size:10.28px;font-family:'Liberation Serif',serif;color:#3a3492;font-style:italic;-webkit-text-stroke:0.2px #3a3392;">Longitudinal data/panel data</div>
<div class="t" style="left:423.95px;top:672.00px;font-size:10.28px;font-family:'Liberation Serif',serif;color:#3a3492;font-style:italic;-webkit-text-stroke:0.2px #3a3392;">Meta-analysis</div>
<div class="t" style="left:423.95px;top:687.00px;font-size:10.28px;font-family:'Liberation Serif',serif;color:#3a3492;font-style:italic;-webkit-text-stroke:0.2px #3a3392;">Mixed models</div>
<div class="t" style="left:423.95px;top:702.00px;font-size:10.28px;font-family:'Liberation Serif',serif;color:#3a3492;font-style:italic;-webkit-text-stroke:0.2px #3a3392;">Multidimensional scaling and biplots</div>
<div class="t" style="left:423.95px;top:717.00px;font-size:10.28px;font-family:'Liberation Serif',serif;color:#3a3492;font-style:italic;-webkit-text-stroke:0.2px #3a3392;">Multilevel mixed-effects models</div>
<div class="t" style="left:423.95px;top:732.00px;font-size:10.28px;font-family:'Liberation Serif',serif;color:#3a3492;font-style:italic;-webkit-text-stroke:0.2px #3a3392;">Multiple imputation</div>
<div class="t" style="left:423.95px;top:747.00px;font-size:10.28px;font-family:'Liberation Serif',serif;color:#3a3492;font-style:italic;-webkit-text-stroke:0.2px #3a3392;">Multivariate analysis of variance and</div>
<div class="t" style="left:436.00px;top:762.00px;font-size:10.28px;font-family:'Liberation Serif',serif;color:#3a3492;font-style:italic;-webkit-text-stroke:0.2px #3a3392;">related techniques</div>
<div class="t" style="left:423.90px;top:777.00px;font-size:10.28px;font-family:'Liberation Serif',serif;color:#3a3492;font-style:italic;-webkit-text-stroke:0.2px #3a3392;">Nonlinear regression</div>
<div class="t" style="left:423.90px;top:792.00px;font-size:10.28px;font-family:'Liberation Serif',serif;color:#3a3492;font-style:italic;-webkit-text-stroke:0.2px #3a3392;">Nonparametric statistics</div>
<div class="t" style="left:423.80px;top:807.00px;font-size:10.28px;font-family:'Liberation Serif',serif;color:#3a3492;font-style:italic;-webkit-text-stroke:0.2px #3a3392;">Ordinal outcomes</div>
<div class="t" style="left:423.80px;top:822.00px;font-size:10.28px;font-family:'Liberation Serif',serif;color:#3a3492;font-style:italic;-webkit-text-stroke:0.2px #3a3392;">Other statistics</div>
<div class="t" style="left:423.90px;top:837.00px;font-size:10.28px;font-family:'Liberation Serif',serif;color:#3a3492;font-style:italic;-webkit-text-stroke:0.2px #3a3392;">Pharmacokinetic statistics</div>
<div class="t" style="left:372.50px;top:861.00px;font-size:12px;font-family:'Liberation Sans',sans-serif;color:#111;font-weight:bold;transform:scaleX(0.6316);">1</div>
</div>
<div id="frame"></div>
</body></html>
